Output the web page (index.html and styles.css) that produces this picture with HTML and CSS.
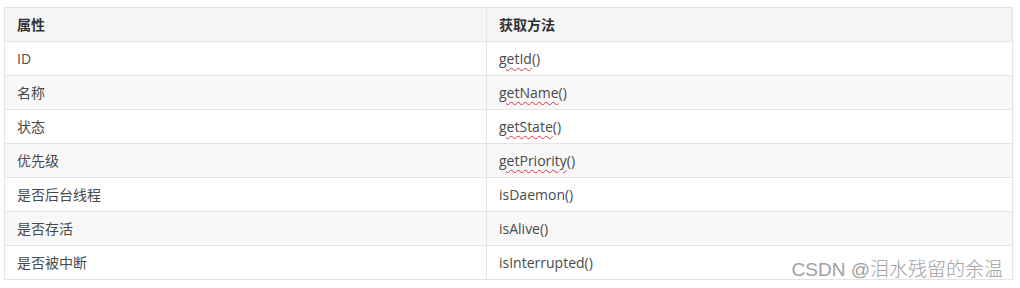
FILE: index.html
```html
<!DOCTYPE html>
<html lang="zh-CN">
<head>
    <meta charset="UTF-8">
    <title>线程属性</title>
    <link rel="stylesheet" href="styles.css">
</head>
<body>

<div class="wrap">
    <table class="props">
        <thead>
            <tr>
                <th class="col-name">属性</th>
                <th>获取方法</th>
            </tr>
        </thead>
        <tbody>
            <tr><td>ID</td><td><span class="typo">getId</span>()</td></tr>
            <tr><td>名称</td><td><span class="typo">getName</span>()</td></tr>
            <tr><td>状态</td><td><span class="typo">getState</span>()</td></tr>
            <tr><td>优先级</td><td><span class="typo">getPriority</span>()</td></tr>
            <tr><td>是否后台线程</td><td>isDaemon()</td></tr>
            <tr><td>是否存活</td><td>isAlive()</td></tr>
            <tr><td>是否被中断</td><td>isInterrupted()</td></tr>
        </tbody>
    </table>
    <div class="watermark">CSDN @泪水残留的余温</div>
</div>

</body>
</html>
```

FILE: styles.css
```css
body {
    margin: 0;
    background: #fff;
    font-family: "Open Sans", "Noto Sans CJK SC", sans-serif;
    color: #4a4a4a;
}

.wrap {
    position: relative;
    padding: 7px 0 0 4px;
}

.props {
    width: 1009px;
    border-collapse: collapse;
    font-size: 14px;
}

.props th,
.props td {
    height: 33px;
    padding: 0 12px;
    border: 1px solid #e4e4e4;
    text-align: left;
    vertical-align: middle;
    line-height: 20px;
}

.props th {
    background: #f5f5f5;
    color: #333;
    font-weight: bold;
}

.col-name {
    width: 457px;
}

.props tbody tr:nth-child(even) td {
    background: #f8f8f8;
}

.typo {
    text-decoration: underline wavy #e03030;
    text-decoration-thickness: 1px;
    text-underline-offset: 3px;
}

/* 水印，压在表格右下角 */
.watermark {
    position: absolute;
    right: 17px;
    top: 259px;
    font-family: "Liberation Sans", "Noto Sans CJK SC", sans-serif;
    font-size: 19px;
    font-weight: 300;
    line-height: 22px;
    color: #a0a0a0;
    text-shadow: 0 0 2px #fff;
}
```
